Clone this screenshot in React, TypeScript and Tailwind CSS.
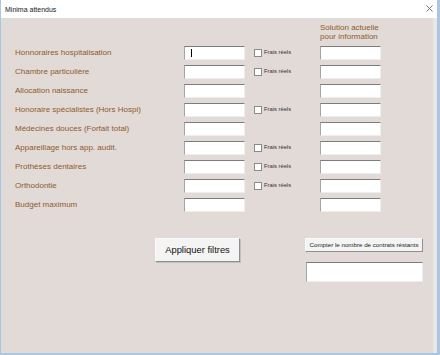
const rows = [
  { label: 'Honnoraires hospitalisation', frais: true, cursor: true },
  { label: 'Chambre particulière', frais: true },
  { label: 'Allocation naissance', frais: false },
  { label: 'Honoraire spécialistes (Hors Hospi)', frais: true },
  { label: 'Médecines douces (Forfait total)', frais: false },
  { label: 'Appareillage hors app. audit.', frais: true },
  { label: 'Prothèses dentaires', frais: true },
  { label: 'Orthodontie', frais: true },
  { label: 'Budget maximum', frais: false },
];

function Field({ w = 'w-[61px]', h = 'h-[14px]', cursor = false }: { w?: string; h?: string; cursor?: boolean }) {
  return (
    <div
      className={`${w} ${h} shrink-0 bg-white border border-t-[#7c7c7c] border-l-[#a4a4a4] border-r-[#ededed] border-b-[#ededed] flex items-center`}
    >
      {cursor && <div className="ml-[6px] w-px h-[8px] bg-black" />}
    </div>
  );
}

export default function App() {
  return (
    <div className="w-[440px] h-[355px] flex flex-col bg-[#a9c6e2] pl-px pr-[3px] pb-[2px] font-['Liberation_Sans',Arial,sans-serif]">
      {/* TITLE BAR */}
      <div className="h-[18px] shrink-0 bg-white flex items-center justify-between pl-[4px] pr-[4px]">
        <span className="text-[7px] leading-none text-[#222]">Minima attendus</span>
        <svg width="7" height="7" viewBox="0 0 7 7" className="mt-[-1px]">
          <path d="M0.5 0.5 L6.5 6.5 M6.5 0.5 L0.5 6.5" stroke="#6a6a6a" strokeWidth="0.9" />
        </svg>
      </div>

      {/* BODY */}
      <div className="flex-1 bg-[#e2dad7] border-r-[4px] border-[#ebe6e4] pl-[14px] pt-[5px]">
        <div className="ml-[305px] text-[8px] leading-[9px] text-[#8c5a2e]">
          <p>Solution actuelle</p>
          <p>pour information</p>
        </div>

        <div className="mt-[5px] flex flex-col gap-[5px]">
          {rows.map((r) => (
            <div key={r.label} className="flex items-center h-[14px]">
              <span className="w-[169px] shrink-0 text-[8px] leading-none text-[#8c5a2e] whitespace-nowrap">{r.label}</span>
              <Field cursor={r.cursor} />
              <div className="ml-[9px] w-[66px] shrink-0 flex items-center">
                {r.frais && (
                  <>
                    <div className="w-[8px] h-[8px] bg-white border border-[#8a8a8a]" />
                    <span className="ml-[2px] text-[5.8px] leading-none text-[#333] whitespace-nowrap">Frais réels</span>
                  </>
                )}
              </div>
              <Field />
            </div>
          ))}
        </div>

        <div className="mt-[26px] flex items-start">
          <button className="ml-[140px] w-[85px] h-[24px] shrink-0 bg-[#f4f4f4] border border-t-[#fafafa] border-l-[#fafafa] border-r-[#8e8e8e] border-b-[#8e8e8e] shadow-[1px_1px_0_#c4c0be] text-[9.4px] text-[#111] flex items-center justify-center">
            Appliquer filtres
          </button>
          <div className="ml-[65px] flex flex-col gap-[10px]">
            <button className="w-[118px] h-[14px] bg-[#f4f4f4] border border-t-[#fafafa] border-l-[#fafafa] border-r-[#8e8e8e] border-b-[#8e8e8e] text-[6.2px] leading-none text-[#222] whitespace-nowrap flex items-center justify-center">
              Compter le nombre de contrats réstants
            </button>
            <div className="ml-px">
              <Field w="w-[117px]" h="h-[20px]" />
            </div>
          </div>
        </div>
      </div>
    </div>
  );
}
